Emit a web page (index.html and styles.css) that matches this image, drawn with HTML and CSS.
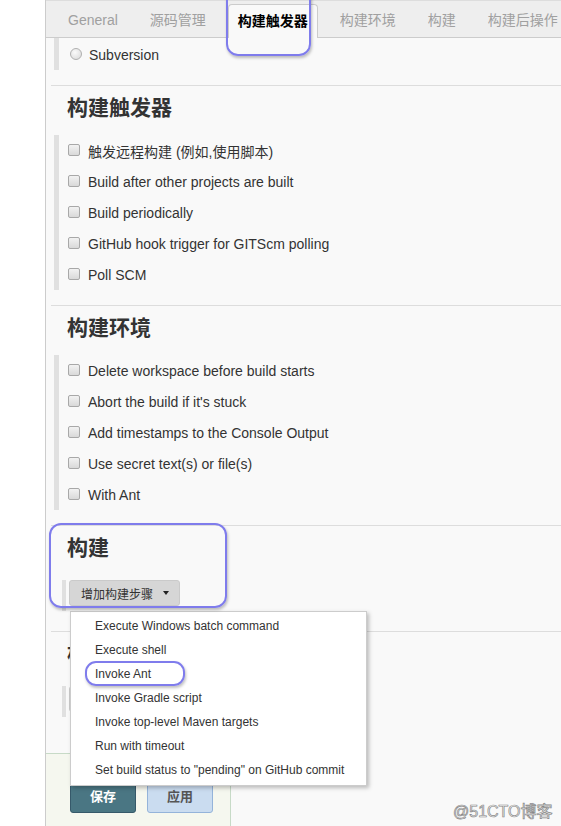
FILE: index.html
```html
<!DOCTYPE html>
<html lang="zh-CN">
<head>
  <meta charset="UTF-8" />
  <meta name="viewport" content="width=device-width, initial-scale=1.0"/>
  <title>Jenkins 配置</title>
  <link rel="stylesheet" href="styles.css">
</head>
<body>
  <div class="page">
    <div class="gutter"></div>
    <div class="main">
      <div class="tabbar">
        <div class="tab">General</div>
        <div class="tab">源码管理</div>
        <div class="tab active">构建触发器</div>
        <div class="tab">构建环境</div>
        <div class="tab">构建</div>
        <div class="tab">构建后操作</div>
      </div>

      <div class="group first">
        <div class="row radio-row"><span class="radio"></span>Subversion</div>
      </div>

      <div class="section">
        <h2>构建触发器</h2>
        <div class="group">
          <div class="row"><span class="check"></span>触发远程构建 (例如,使用脚本)</div>
          <div class="row"><span class="check"></span>Build after other projects are built</div>
          <div class="row"><span class="check"></span>Build periodically</div>
          <div class="row"><span class="check"></span>GitHub hook trigger for GITScm polling</div>
          <div class="row"><span class="check"></span>Poll SCM</div>
        </div>
      </div>

      <div class="section">
        <h2>构建环境</h2>
        <div class="group">
          <div class="row"><span class="check"></span>Delete workspace before build starts</div>
          <div class="row"><span class="check"></span>Abort the build if it's stuck</div>
          <div class="row"><span class="check"></span>Add timestamps to the Console Output</div>
          <div class="row"><span class="check"></span>Use secret text(s) or file(s)</div>
          <div class="row"><span class="check"></span>With Ant</div>
        </div>
      </div>

      <div class="section">
        <h2>构建</h2>
        <div class="add-row">
          <button class="add-btn">增加构建步骤 <span class="caret"></span></button>
        </div>
      </div>

      <div class="section">
        <h2>构建后操作</h2>
        <div class="add-row">
          <button class="add-btn">增加构建后操作步骤 <span class="caret"></span></button>
        </div>
      </div>

      <div class="bottom-sticker">
        <button class="save">保存</button>
        <button class="apply">应用</button>
      </div>
    </div>
  </div>

  <ul class="menu">
    <li>Execute Windows batch command</li>
    <li>Execute shell</li>
    <li>Invoke Ant</li>
    <li>Invoke Gradle script</li>
    <li>Invoke top-level Maven targets</li>
    <li>Run with timeout</li>
    <li>Set build status to "pending" on GitHub commit</li>
  </ul>

  <div class="mark mark-tab"></div>
  <div class="mark mark-build"></div>
  <div class="mark mark-ant"></div>

  <div class="watermark">@51CTO博客</div>
</body>
</html>
```

FILE: styles.css
```css
body {
  margin: 0;
  font-family: 'Liberation Sans', 'Noto Sans CJK SC', sans-serif;
  font-size: 14px;
  color: #333;
  background: #fff;
  overflow: hidden;
}

.page {
  display: flex;
  height: 826px;
}

.gutter {
  width: 45px;
  flex-shrink: 0;
}

.main {
  flex: 1;
  border-left: 1px solid #ccc;
  background: #f9f9f9;
  overflow: hidden;
}

.tabbar {
  display: flex;
  align-items: flex-end;
  gap: 12px;
  height: 38px;
  box-sizing: border-box;
  padding-left: 12px;
  background: #eee;
  border-top: 1px solid #ddd;
  border-bottom: 1px solid #ccc;
  white-space: nowrap;
}

.tab {
  height: 33px;
  line-height: 33px;
  padding: 0 10px;
  color: #a0a0a0;
  box-sizing: border-box;
}

.tab.active {
  height: 34px;
  margin-bottom: -1px;
  padding: 0 9px;
  background: #f9f9f9;
  color: #000;
  font-weight: bold;
  border: 1px solid #ccc;
  border-bottom: none;
  border-radius: 4px 4px 0 0;
  line-height: 32px;
}

.group {
  margin-left: 8px;
  border-left: 5px solid #e0e0e0;
}

.group.first {
  padding-top: 1px;
}

.row {
  display: flex;
  align-items: center;
  height: 31px;
  padding-left: 9px;
  white-space: nowrap;
}

.radio-row {
  padding-left: 11px;
}

.check {
  width: 12px;
  height: 12px;
  box-sizing: border-box;
  border: 1px solid #a8a8a8;
  border-radius: 2px;
  background: linear-gradient(#f2f2f2, #d9d9d9);
  margin-right: 8px;
  margin-top: -1px;
}

.radio {
  width: 12px;
  height: 12px;
  box-sizing: border-box;
  border: 1px solid #b0b0b0;
  border-radius: 50%;
  background: radial-gradient(circle at 40% 35%, #fafafa, #d8d8d8);
  margin-right: 7px;
  margin-top: -2px;
}

.section {
  margin-top: 15px;
  margin-left: 5px;
  border-top: 1px solid #ddd;
}

.section .group {
  margin-left: 3px;
}

h2 {
  margin: 6px 0 15px 16px;
  font-family: 'Noto Sans CJK SC', sans-serif;
  font-size: 21px;
  line-height: 28px;
  font-weight: bold;
  color: #333;
}

.add-row {
  margin: 20px 0 20px 11px;
  height: 31px;
  border-left: 4px solid #e0e0e0;
  padding-left: 3px;
}

.add-btn {
  height: 26px;
  padding: 0 10px 0 11px;
  border: 1px solid #cacaca;
  border-radius: 3px;
  background: #d6d6d6;
  color: #333;
  font-family: 'Noto Sans CJK SC', sans-serif;
  font-size: 12px;
  display: flex;
  align-items: center;
  gap: 6px;
  white-space: nowrap;
}

.caret {
  width: 0;
  height: 0;
  margin-left: 4px;
  border-left: 3px solid transparent;
  border-right: 3px solid transparent;
  border-top: 4px solid #222;
}

.bottom-sticker {
  margin-top: 36px;
  width: 186px;
  height: 80px;
  box-sizing: border-box;
  margin-left: -1px;
  padding: 23px 0 0 24px;
  display: flex;
  gap: 11px;
  align-items: flex-start;
  background: #f5f7ef;
  border: 1px solid #c7dac7;
}

.save,
.apply {
  width: 66px;
  height: 36px;
  border-radius: 3px;
  font-family: 'Noto Sans CJK SC', sans-serif;
  font-size: 13px;
  font-weight: bold;
}

.save {
  background: #4a7683;
  border: 1px solid #36596a;
  color: #fff;
}

.apply {
  background: #cadcf0;
  border: 1px solid #94b3da;
  color: #555;
}

.menu {
  position: absolute;
  left: 70px;
  top: 611px;
  width: 297px;
  margin: 0;
  padding: 2px 0 3px;
  box-sizing: border-box;
  list-style: none;
  background: #fff;
  border: 1px solid #ccc;
  box-shadow: 2px 2px 4px rgba(0, 0, 0, 0.25);
  font-size: 12px;
  color: #333;
}

.menu li {
  height: 24px;
  line-height: 24px;
  padding-left: 24px;
  white-space: nowrap;
}

.mark {
  position: absolute;
  border: 2px solid #7f7cec;
  box-shadow: 1px 2px 3px rgba(0, 0, 0, 0.25);
}

.mark-tab {
  left: 226px;
  top: -14px;
  width: 81px;
  height: 66px;
  border-radius: 12px;
}

.mark-build {
  left: 49px;
  top: 523px;
  width: 174px;
  height: 81px;
  border-radius: 12px;
}

.mark-ant {
  left: 85px;
  top: 661px;
  width: 96px;
  height: 21px;
  border-radius: 11px;
}

.watermark {
  position: absolute;
  left: 453px;
  top: 798px;
  font-size: 16px;
  color: #f4f4f4;
  -webkit-text-stroke: 0.7px #888;
  white-space: nowrap;
}
```
